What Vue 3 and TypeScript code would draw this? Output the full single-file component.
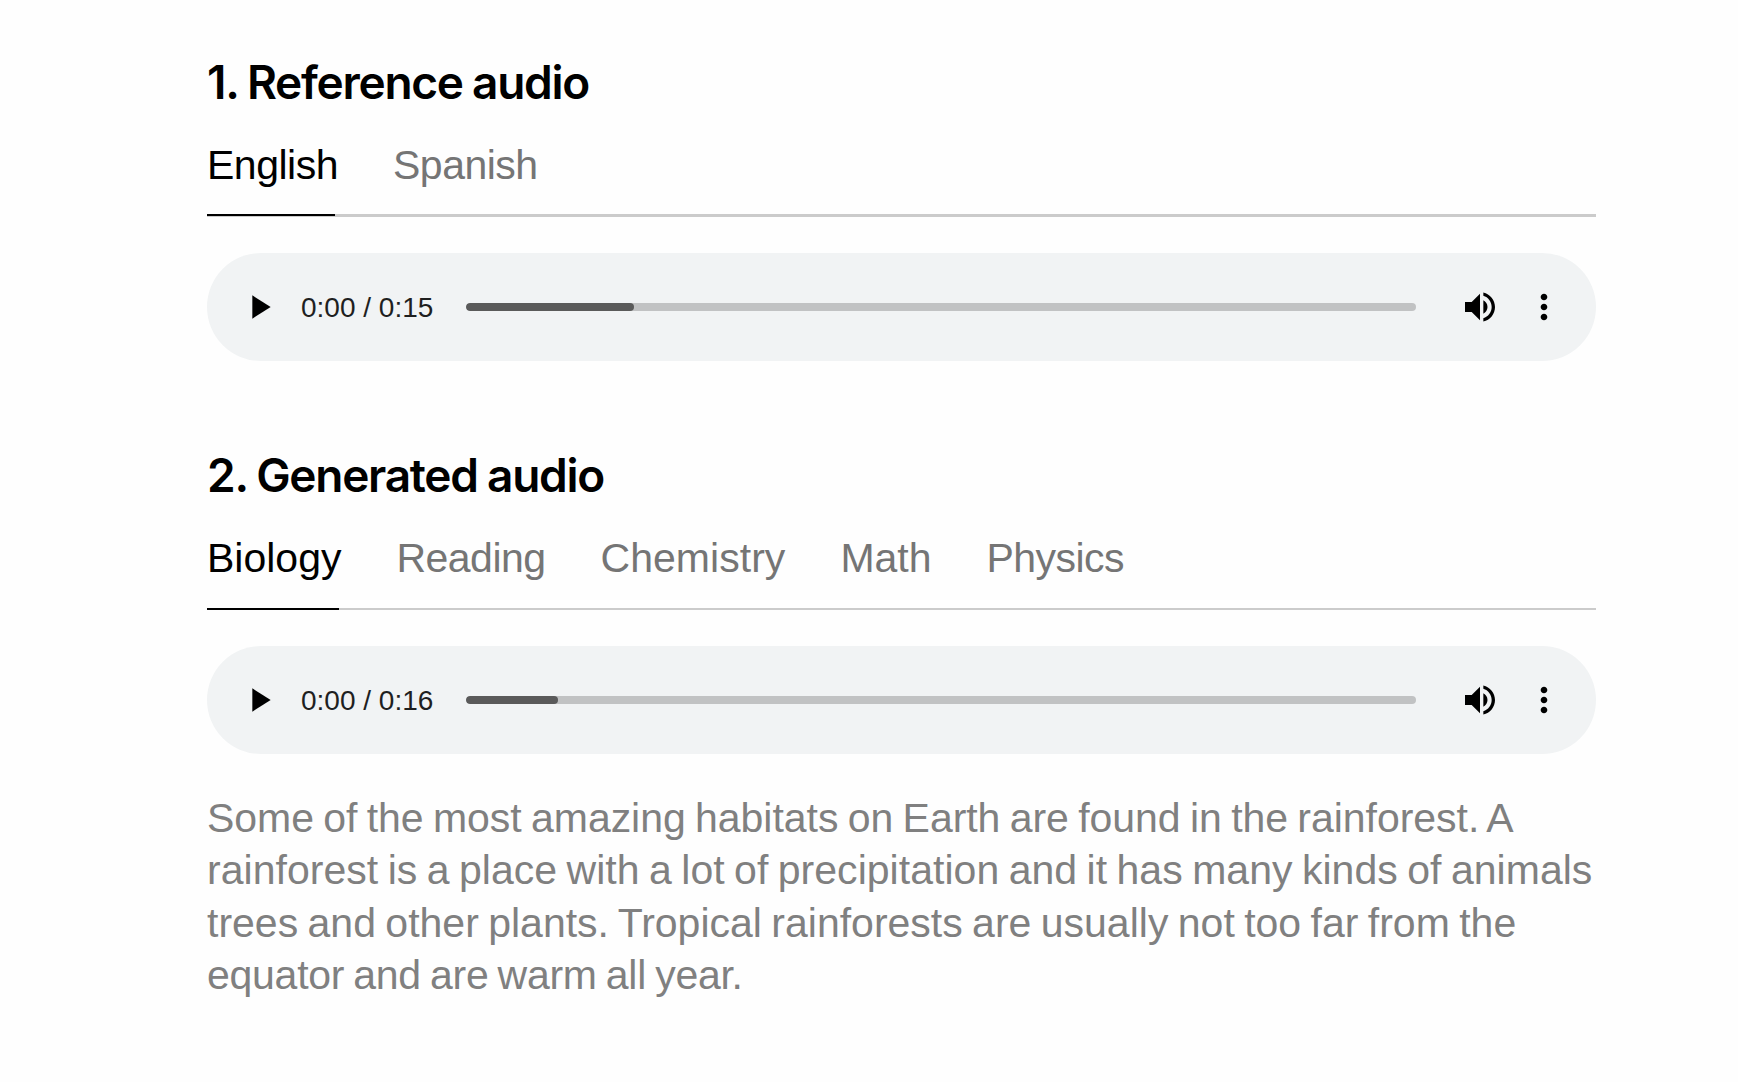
<script setup lang="ts">
import { ref } from 'vue'

interface TextRun {
  label: string
  tracking: number
}

interface AudioSection {
  title: string
  tabs: TextRun[]
  underline: number
  duration: string
  buffered: number
  transcript?: TextRun[]
}

const sections: AudioSection[] = [
  {
    title: '1. Reference audio',
    tabs: [
      { label: 'English', tracking: -0.5 },
      { label: 'Spanish', tracking: -0.5 },
    ],
    underline: 128,
    duration: '0:15',
    buffered: 17.68,
  },
  {
    title: '2. Generated audio',
    tabs: [
      { label: 'Biology', tracking: 0 },
      { label: 'Reading', tracking: -0.53 },
      { label: 'Chemistry', tracking: 0.04 },
      { label: 'Math', tracking: 0 },
      { label: 'Physics', tracking: -0.55 },
    ],
    underline: 132,
    duration: '0:16',
    buffered: 9.68,
    transcript: [
      { label: 'Some of the most amazing habitats on Earth are found in the rainforest. A', tracking: -0.04 },
      { label: 'rainforest is a place with a lot of precipitation and it has many kinds of animals', tracking: 0.03 },
      { label: 'trees and other plants. Tropical rainforests are usually not too far from the', tracking: 0 },
      { label: 'equator and are warm all year.', tracking: -0.27 },
    ],
  },
]

const active = ref([0, 0])
</script>

<template>
  <main class="page">
    <section
      v-for="(section, i) in sections"
      :key="section.title"
      class="audio-section"
    >
      <h2 class="title">{{ section.title }}</h2>

      <nav class="tabs">
        <button
          v-for="(tab, t) in section.tabs"
          :key="tab.label"
          class="tab"
          :class="{ 'is-active': active[i] === t }"
          :style="{ letterSpacing: `${tab.tracking}px` }"
          @click="active[i] = t"
        >{{ tab.label }}</button>
        <span
          class="underline"
          :style="{ width: `${section.underline}px` }"
        />
      </nav>

      <div class="player">
        <svg class="icon" viewBox="0 0 24 24"><path d="M8 5v14l11-7z" /></svg>
        <span class="time">0:00 / {{ section.duration }}</span>
        <div class="track">
          <div
            class="buffered"
            :style="{ width: `${section.buffered}%` }"
          />
        </div>
        <svg class="icon volume" viewBox="0 0 24 24"><path d="M3 9v6h4l5 5V4L7 9H3zm13.5 3c0-1.77-1.02-3.29-2.5-4.03v8.05c1.48-.73 2.5-2.25 2.5-4.02zM14 3.23v2.06c2.89.86 5 3.54 5 6.71s-2.11 5.85-5 6.71v2.06c4.01-.91 7-4.49 7-8.77s-2.99-7.86-7-8.77z" /></svg>
        <svg class="icon more" viewBox="0 0 24 24"><path d="M12 8c1.1 0 2-.9 2-2s-.9-2-2-2-2 .9-2 2 .9 2 2 2zm0 2c-1.1 0-2 .9-2 2s.9 2 2 2 2-.9 2-2-.9-2-2-2zm0 6c-1.1 0-2 .9-2 2s.9 2 2 2 2-.9 2-2-.9-2-2-2z" /></svg>
      </div>

      <p
        v-if="section.transcript"
        class="transcript"
      >
        <span
          v-for="line in section.transcript"
          :key="line.label"
          class="line"
          :style="{ letterSpacing: `${line.tracking}px` }"
        >{{ line.label }}</span>
      </p>
    </section>
  </main>
</template>

<style>
body {
  background: #fefefe;
}
</style>

<style scoped>
.page {
  box-sizing: border-box;
  width: 1738px;
  height: 1082px;
  padding: 51px 142px 0 207px;
  overflow: hidden;
  display: flex;
  flex-direction: column;
  gap: 83px;
  background: #fefefe;
  font-family: 'Liberation Sans', Arial, sans-serif;
}

.title {
  margin: 0 0 26px;
  padding-top: 1px;
  font-family: Inter, sans-serif;
  font-size: 46px;
  line-height: 60px;
  font-weight: 600;
  letter-spacing: -1.27px;
  word-spacing: -1px;
  color: #000;
}

.tabs {
  position: relative;
  box-sizing: border-box;
  height: 79px;
  display: flex;
  align-items: flex-start;
  gap: 55px;
  border-bottom: 2px solid #cbcbcb;
}

.audio-section:first-child .tabs {
  border-bottom-width: 3px;
}

.tab {
  padding: 1px 0 0;
  border: 0;
  background: none;
  font-family: inherit;
  font-size: 41px;
  line-height: 53px;
  color: #757575;
  cursor: pointer;
}

.tab.is-active {
  color: #000;
}

.underline {
  position: absolute;
  top: 100%;
  left: 0;
  height: 2px;
  background: #000;
}

.player {
  box-sizing: border-box;
  height: 108px;
  margin-top: 36px;
  padding: 0 32px;
  display: flex;
  align-items: center;
  border-radius: 54px;
  background: #f1f3f4;
}

.icon {
  flex: none;
  width: 40px;
  height: 40px;
  fill: #000;
}

.time {
  flex: none;
  width: 165px;
  margin-left: 22px;
  padding-top: 1px;
  font-size: 28px;
  line-height: 32px;
  color: #1f1f1f;
  white-space: nowrap;
  text-shadow: 0 0 16px rgba(255, 255, 255, 0.4);
}

.track {
  flex: 1;
  height: 8px;
  border-radius: 4px;
  background: #c1c2c3;
  overflow: hidden;
}

.buffered {
  height: 100%;
  border-radius: 4px;
  background: #5a5a5a;
}

.volume {
  margin-left: 44px;
}

.more {
  margin-left: 24px;
}

.transcript {
  margin: 37.7px 0 0;
  font-size: 41px;
  line-height: 52.6px;
  word-spacing: -2px;
  color: #808080;
}

.line {
  display: block;
  white-space: nowrap;
}
</style>
